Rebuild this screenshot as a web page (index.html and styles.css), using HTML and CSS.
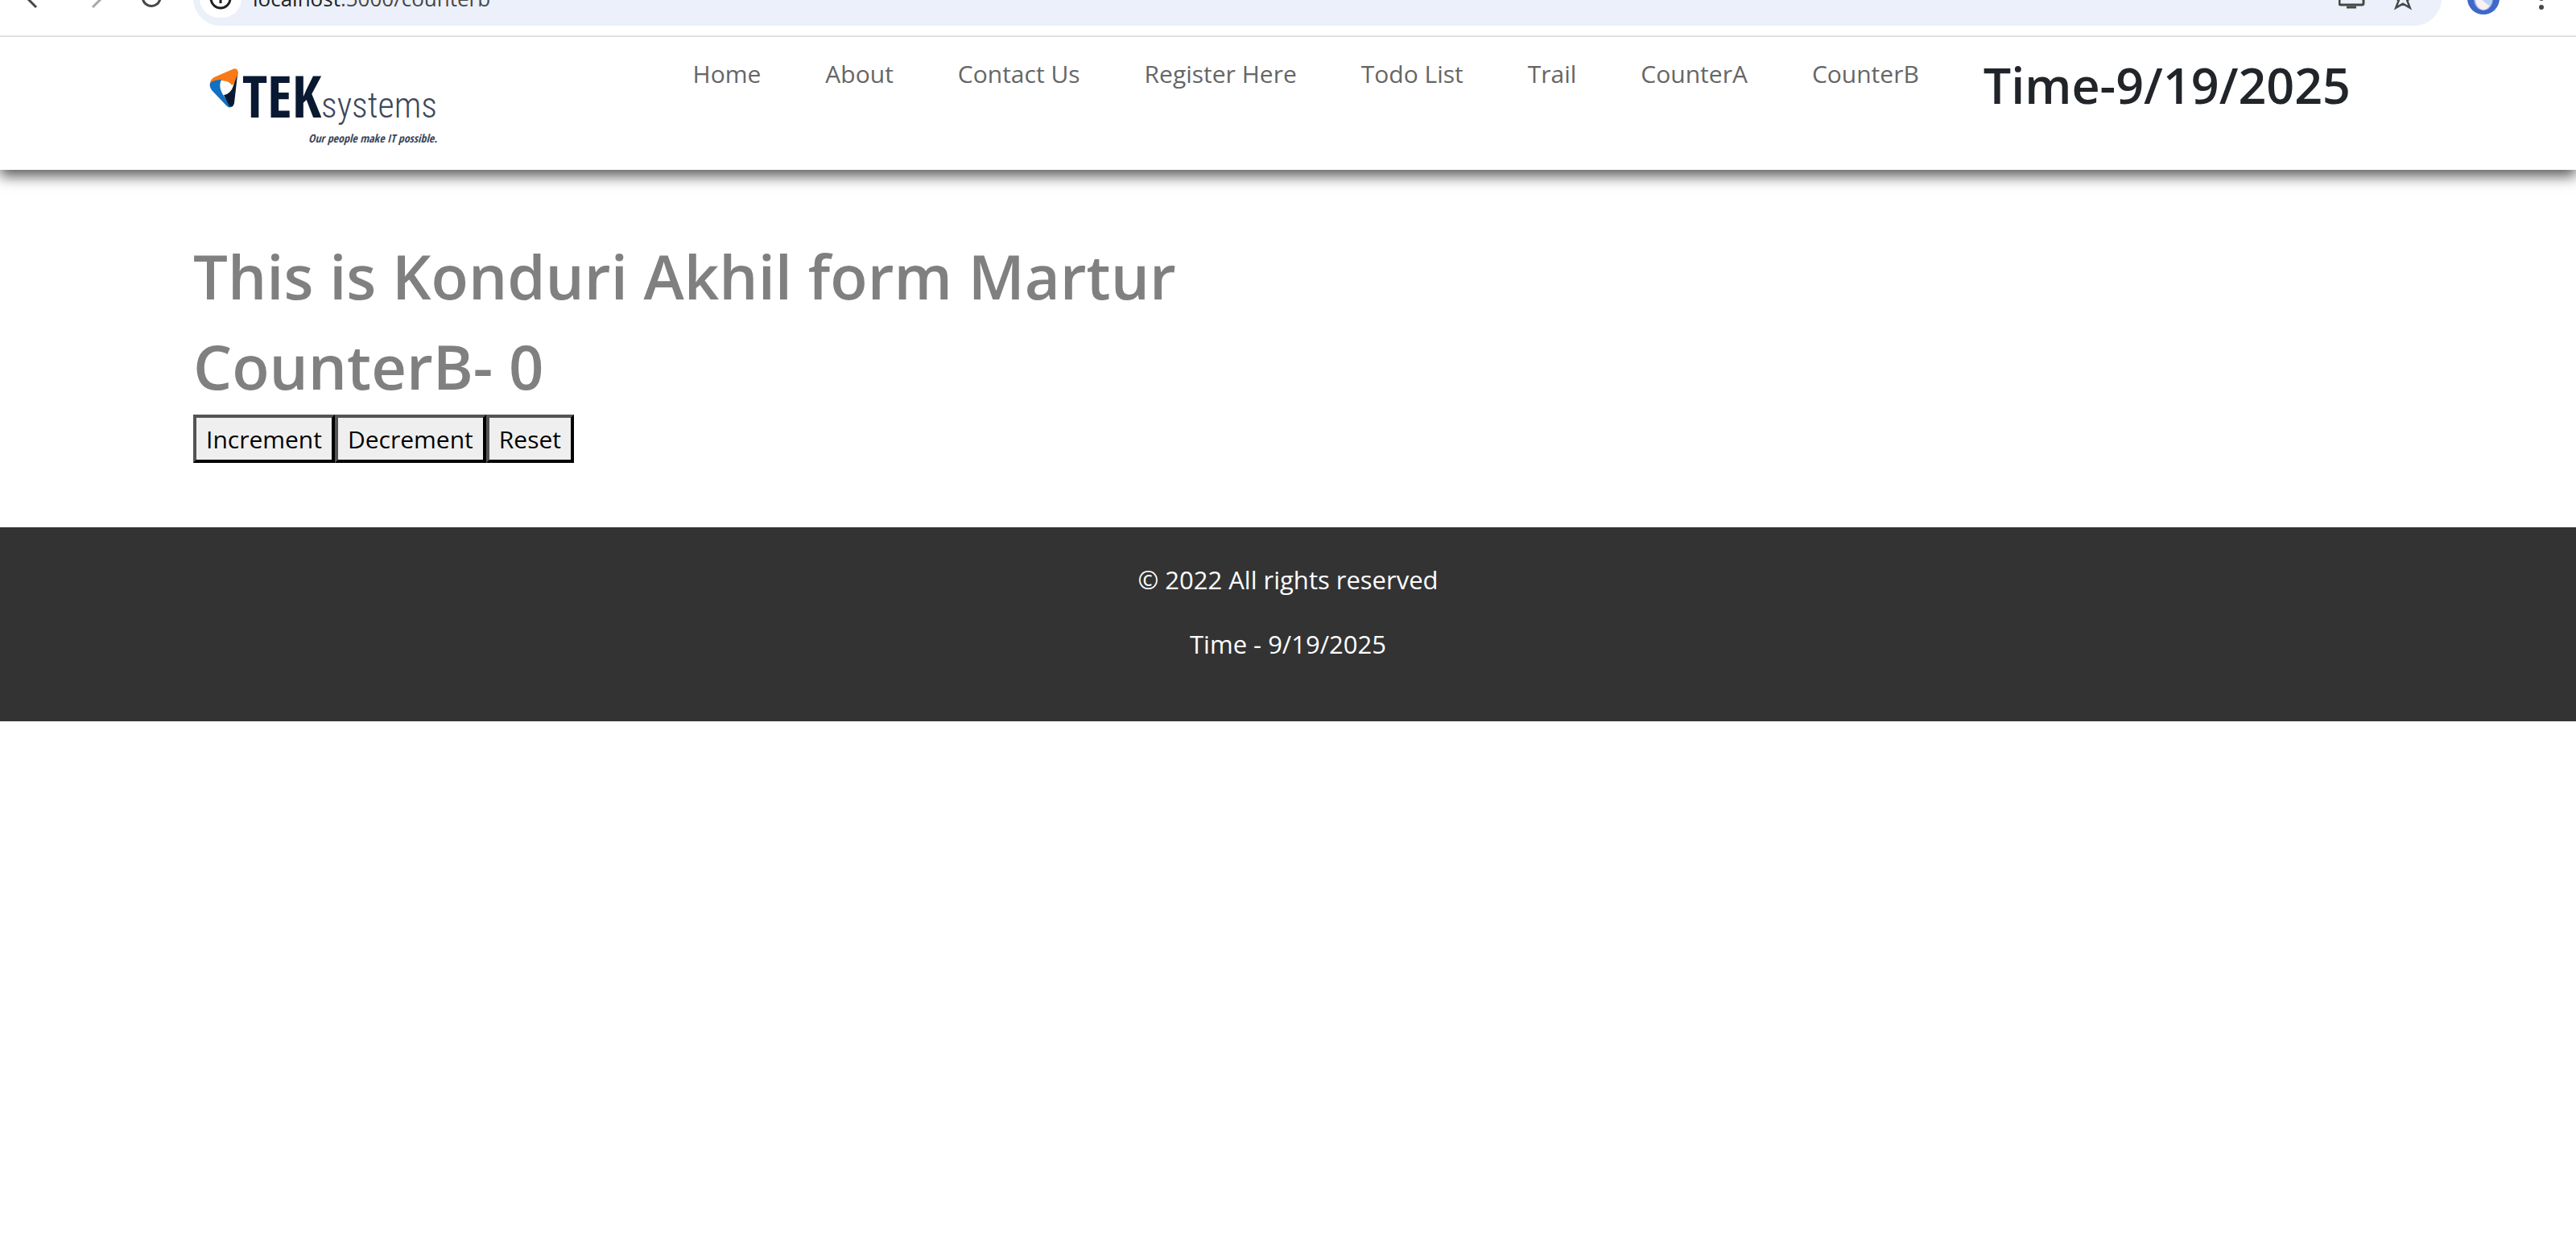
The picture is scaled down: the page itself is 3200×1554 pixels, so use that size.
FILE: index.html
```html
<!DOCTYPE html>
<html lang="en">
<head>
<meta charset="utf-8">
<meta name="viewport" content="width=device-width, initial-scale=1">
<title>CounterB</title>
<link rel="stylesheet" href="styles.css">
</head>
<body>
<div class="browser-bar">
  <div class="browser-row">
    <div class="browser-nav">
      <button class="icon-button" type="button" aria-label="Back">
        <svg width="32" height="32" viewBox="0 0 32 32" fill="none" stroke="#474747" stroke-width="3"><path d="M18 5 7 16l11 11M7 16h22"/></svg>
      </button>
      <button class="icon-button" type="button" aria-label="Forward">
        <svg width="32" height="32" viewBox="0 0 32 32" fill="none" stroke="#a9a9a9" stroke-width="3"><path d="M14 5l11 11-11 11M25 16H3"/></svg>
      </button>
      <button class="icon-button" type="button" aria-label="Reload">
        <svg width="32" height="32" viewBox="0 0 32 32" fill="none" stroke="#474747" stroke-width="3"><path d="M22 8a11 11 0 1 0 2 8M23 3v8h-8"/></svg>
      </button>
    </div>
    <div class="address">
      <span class="site-info">
        <svg width="32" height="32" viewBox="0 0 32 32" fill="none" stroke="#1f1f1f" stroke-width="3"><circle cx="16" cy="16" r="12"/><path d="M16 14v8M16 9v3"/></svg>
      </span>
      <span class="url"><span class="url-host">localhost</span>:5000/counterb</span>
      <span class="address-icons">
        <svg width="36" height="32" viewBox="0 0 36 32" fill="none" stroke="#474747" stroke-width="3"><rect x="1" y="0" width="30" height="24" rx="2"/><path d="M10 27h12"/></svg>
        <svg width="32" height="32" viewBox="0 0 32 32" fill="none" stroke="#474747" stroke-width="2.500"><path d="M16 4l3.300 8.400 9 .6-7 5.600 3.400 9-8.700-5-8.700 5 3.400-9-7-5.600 9-.6z"/></svg>
      </span>
    </div>
    <svg class="avatar" width="40" height="40" viewBox="0 0 40 40"><circle cx="20" cy="20" r="20" fill="#3f68ca"/><ellipse cx="20" cy="20" rx="12" ry="15" fill="#a9bfee"/><ellipse cx="20" cy="20" rx="10" ry="14" fill="#f8f0f3"/><path d="M16 20l11 9q3-4 3-10z" fill="#b8d2f7"/></svg>
    <button class="icon-button" type="button" aria-label="Menu">
      <svg width="32" height="32" viewBox="0 0 32 32" fill="#474747"><circle cx="16" cy="5" r="3"/><circle cx="16" cy="16" r="3"/><circle cx="16" cy="27" r="3"/></svg>
    </button>
  </div>
</div>

<header class="navbar">
  <a class="brand" href="#" aria-label="TEKsystems">
    <svg width="324" height="121" viewBox="0 0 324 121" role="img">
      <g transform="translate(0 4)">
        <path d="M21 31c0-3 2-5 5-7l23-10c4-2 7 0 7 5l-3 11-5 4c-2-4-8-6-14-6-5 0-9 1-13 3z" fill="#f97a16"/>
        <path d="M21 31c4-3 8-4 14-4-3 6-2 13 3 20l9 14c-2 1-4 0-6-2L23 40c-2-3-3-6-2-9z" fill="#1170c2"/>
        <path d="M55 21l-4 35c-1 4-3 6-6 4l-7-14c6-1 10-5 12-12z" fill="#0a1932"/>
      </g>
      <text class="logo-tek" x="61" y="78">TEK</text>
      <text class="logo-systems" x="159" y="78">systems</text>
      <text class="logo-tagline" x="303" y="109" text-anchor="end">Our people make IT possible.</text>
    </svg>
  </a>
  <nav class="menu">
    <a href="#">Home</a>
    <a href="#">About</a>
    <a href="#">Contact Us</a>
    <a href="#">Register Here</a>
    <a href="#">Todo List</a>
    <a href="#">Trail</a>
    <a href="#">CounterA</a>
    <a href="#">CounterB</a>
    <h2 class="clock">Time-9/19/2025</h2>
  </nav>
</header>

<main class="content">
  <h1>This is Konduri Akhil form Martur</h1>
  <h1>CounterB- 0</h1>
  <div class="actions">
    <button class="action" type="button">Increment</button>
    <button class="action" type="button">Decrement</button>
    <button class="action" type="button">Reset</button>
  </div>
</main>

<footer class="footer">
  <p>© 2022 All rights reserved</p>
  <p>Time - 9/19/2025</p>
</footer>
</body>
</html>
```
FILE: styles.css
```css
* {
  box-sizing: border-box;
}

body {
  margin: 0;
  background: #fff;
  color: #212529;
  font-family: "Open Sans", "Noto Sans", sans-serif;
  font-size: 30px;
  line-height: 48px;
}

h1,
h2,
p {
  margin: 0;
}

svg {
  display: block;
}

/* Browser toolbar: the upper half of the row is scrolled out of view */
.browser-bar {
  position: relative;
  z-index: 2;
  display: flex;
  align-items: flex-end;
  height: 46px;
  padding-bottom: 12px;
  border-bottom: 2px solid #e1e1e1;
  background: #fff;
  overflow: hidden;
}

.browser-row {
  display: flex;
  flex: 1;
  align-items: center;
  height: 68px;
  padding: 0 27px;
}

.browser-nav {
  display: flex;
  gap: 42px;
  width: 213px;
}

.icon-button {
  padding: 0;
  border: 0;
  background: none;
}

.address {
  display: flex;
  flex: 1;
  align-items: center;
  height: 68px;
  padding: 0 32px 0 8px;
  border-radius: 34px;
  background: #ebf0fa;
}

.site-info {
  display: flex;
  align-items: center;
  justify-content: center;
  width: 52px;
  height: 48px;
  border-radius: 24px;
  background: #fff;
}

.url {
  flex: 1;
  margin-left: 14px;
  color: #474747;
  font-size: 26px;
}

.url-host {
  color: #1f1f1f;
}

.address-icons {
  display: flex;
  gap: 28px;
}

.avatar {
  margin: 0 36px 0 32px;
}

/* Site header */
.navbar {
  position: relative;
  display: flex;
  justify-content: space-between;
  align-items: flex-start;
  padding: 22px 240px;
  background: #fff;
  box-shadow: 0 8px 16px rgba(0, 0, 0, .64);
}

.menu {
  display: flex;
  align-items: flex-start;
}

.menu a {
  padding: 0 40px;
  color: #666;
  text-decoration: none;
}

.clock {
  padding: 0 40px;
  font-size: 61px;
  font-weight: 600;
  line-height: 76px;
}

.logo-tek {
  font-family: "Open Sans Condensed", "Open Sans", sans-serif;
  font-size: 72px;
  font-weight: 800;
  fill: #0a1932;
}

.logo-systems {
  font-family: "Roboto Condensed", Roboto, sans-serif;
  font-size: 44px;
  font-weight: 300;
  fill: #3c475b;
}

.logo-tagline {
  font-family: "Open Sans Condensed", "Open Sans", sans-serif;
  font-size: 14px;
  font-style: italic;
  font-weight: 600;
  fill: #3c475b;
}

/* Counter */
.content {
  padding: 80px 240px;
}

.content h1 {
  margin-bottom: 8px;
  color: #808080;
  font-size: 76px;
  font-weight: 600;
  line-height: 104px;
}

.actions {
  display: flex;
}

.action {
  padding: 3px 12px 1px;
  border: 4px outset #000;
  border-radius: 0;
  background: #efefef;
  color: #000;
  font: inherit;
}

/* Footer */
.footer {
  padding: 41px 40px 40px;
  background: #333;
  color: #fff;
  font-size: 31px;
  text-align: center;
}

.footer p {
  margin-bottom: 32px;
}
```
